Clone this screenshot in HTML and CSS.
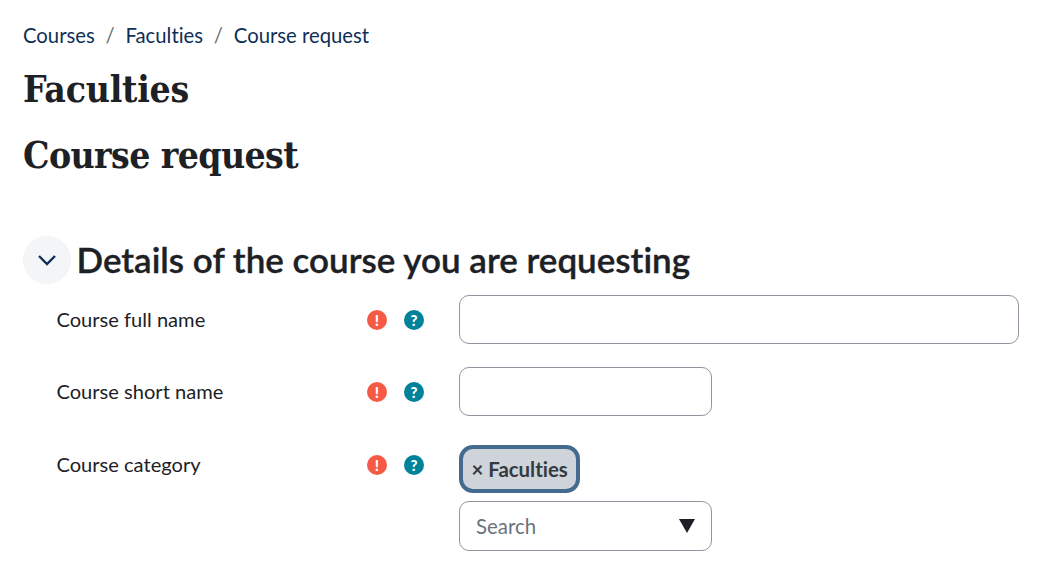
FILE: index.html
```html
<!DOCTYPE html>
<html lang="en">
<head>
<meta charset="utf-8">
<title>Course request</title>
<link rel="stylesheet" href="styles.css">
</head>
<body>
<nav class="crumbs">
  <a>Courses</a><span class="sep">/</span><a>Faculties</a><span class="sep">/</span><a>Course request</a>
</nav>
<h1 class="title">Faculties</h1>
<h2 class="subtitle">Course request</h2>
<section class="section">
  <div class="section-head">
    <span class="toggle">
      <svg width="20" height="12" viewBox="0 0 20 12"><path d="M2 2l8 8 8-8" fill="none" stroke="#0f2f57" stroke-width="2.4"/></svg>
    </span>
    <h3 class="section-title">Details of the course you are requesting</h3>
  </div>
  <div class="row">
    <label class="label">Course full name</label>
    <div class="icons">
      <span class="badge req">!</span><span class="badge help">?</span>
    </div>
    <input class="input wide" type="text">
  </div>
  <div class="row">
    <label class="label">Course short name</label>
    <div class="icons">
      <span class="badge req">!</span><span class="badge help">?</span>
    </div>
    <input class="input narrow" type="text">
  </div>
  <div class="row row-category">
    <label class="label">Course category</label>
    <div class="icons">
      <span class="badge req">!</span><span class="badge help">?</span>
    </div>
    <div class="field">
      <span class="tag"><span class="tag-x">×</span> Faculties</span>
      <div class="select">
        <span class="placeholder">Search</span>
        <span class="arrow"></span>
      </div>
    </div>
  </div>
</section>
</body>
</html>
```
FILE: styles.css
```css
html, body { margin: 0; padding: 0; background: #fff; }
body {
  width: 1055px;
  height: 571px;
  overflow: hidden;
  box-sizing: border-box;
  padding: 21px 36px 0 23px;
  font-family: Lato, "Liberation Sans", sans-serif;
  font-size: 20px;
  font-variant-ligatures: none;
  color: #1d2125;
}
.crumbs {
  display: flex;
  align-items: center;
  height: 28px;
  line-height: 28px;
  font-size: 20.3px;
  color: #0f2f57;
}
.sep { margin: 0 10.8px; color: #6a737b; }
.title, .subtitle {
  margin: 0;
  font-family: "DejaVu Serif Condensed", "DejaVu Serif", serif;
  font-weight: 700;
  color: #1d2125;
}
.title { font-size: 37px; line-height: 48px; margin-top: 16px; letter-spacing: -0.25px; }
.subtitle { font-size: 37px; line-height: 48px; margin-top: 18px; letter-spacing: -0.6px; }
.section { margin-top: 57px; }
.section-head { display: flex; align-items: center; gap: 5.5px; height: 48px; }
.toggle {
  width: 48px;
  height: 48px;
  flex: none;
  border-radius: 50%;
  background: #f4f5f7;
  display: flex;
  align-items: center;
  justify-content: center;
}
.section-title {
  margin: -2px 0 0;
  font-size: 35px;
  line-height: 48px;
  font-weight: 600;
  -webkit-text-stroke: 0.35px #1d2125;
  color: #1d2125;
}
.row {
  display: flex;
  align-items: flex-start;
  margin-top: 11px;
  padding-left: 33.5px;
}
.row + .row { margin-top: 23px; }
.row + .row-category { margin-top: 24px; }
.label { width: 310.5px; line-height: 49px; height: 49px; flex: none; font-size: 20.1px; }
.icons {
  width: 92px;
  flex: none;
  height: 49px;
  display: flex;
  align-items: center;
  gap: 17px;
}
.badge {
  width: 20px;
  height: 20px;
  margin-top: 1px;
  border-radius: 50%;
  color: #fff;
  font-weight: 900;
  font-size: 15px;
  line-height: 20px;
  text-align: center;
}
.req { background: #f55a46; }
.help { background: #00829b; }
.input {
  box-sizing: border-box;
  height: 49px;
  border: 1px solid #8f959e;
  border-radius: 10px;
  background: #fff;
  padding: 0 16px;
  margin: 0;
  font: inherit;
}
.wide { width: 560px; }
.narrow { width: 253px; }
.field { display: flex; flex-direction: column; align-items: flex-start; gap: 8px; margin-top: 5px; }
.tag {
  box-sizing: border-box;
  height: 48px;
  padding: 0 8.5px;
  border: 4.5px solid #456a8f;
  border-radius: 14px;
  background: #ced4da;
  font-weight: 700;
  font-size: 20.4px;
  line-height: 41px;
  color: #343a40;
}
.select {
  box-sizing: border-box;
  width: 253px;
  height: 50px;
  border: 1px solid #8f959e;
  border-radius: 10px;
  padding: 0 16px;
  display: flex;
  align-items: center;
  justify-content: space-between;
}
.placeholder { color: #6a737b; font-size: 20.4px; }
.arrow {
  width: 0;
  height: 0;
  border-left: 8px solid transparent;
  border-right: 8px solid transparent;
  border-top: 14px solid #1d2125;
}
```
